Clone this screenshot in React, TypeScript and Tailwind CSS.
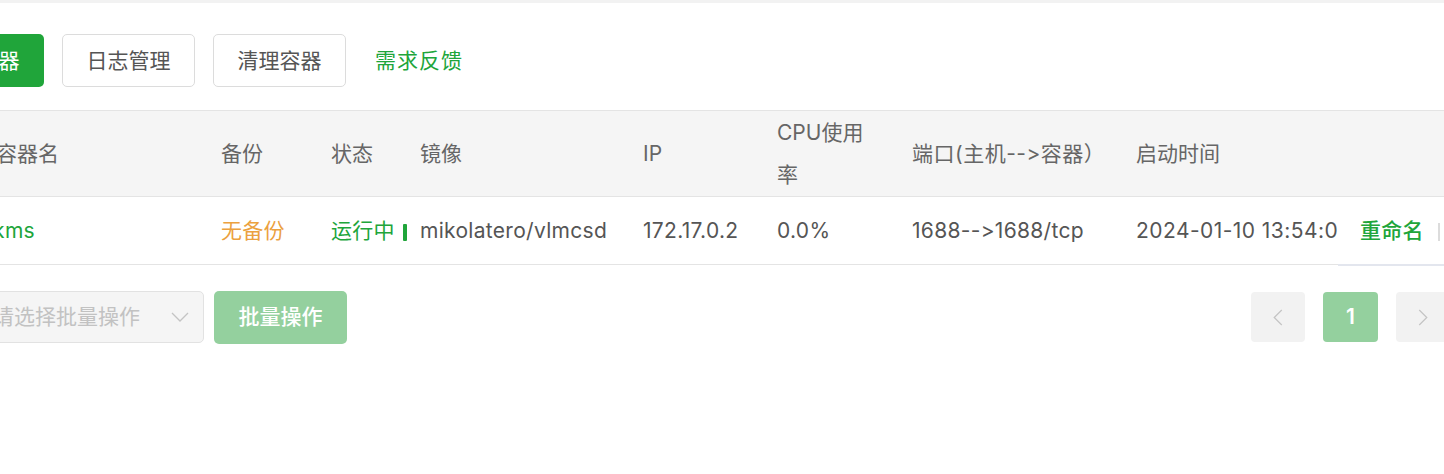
import React from 'react';

const Chevron: React.FC<{ dir: 'left' | 'right' | 'down'; className?: string }> = ({ dir, className }) => {
  const pts = dir === 'left' ? '9,1 1,9 9,17' : dir === 'right' ? '1,1 9,9 1,17' : '1,1 9,9 17,1';
  const box = dir === 'down' ? '0 0 18 10' : '0 0 10 18';
  return (
    <svg viewBox={box} className={className} fill="none" stroke="currentColor" strokeWidth="1.3">
      <polyline points={pts} />
    </svg>
  );
};

const cols = [300, 110, 89, 223, 134, 135, 224, 212, 112];

export default function App() {
  return (
    <div className="w-[1444px] h-[474px] overflow-hidden bg-white text-[21px] text-[#555] font-['Inter','Noto_Sans_CJK_SC',sans-serif] [font-feature-settings:'calt'_0,'liga'_0]">
      <div className="h-[3px] bg-[#f2f2f2]" />
      <div className="-ml-[89px] w-[1539px] pt-[31px]">
        {/* toolbar */}
        <div className="flex items-center gap-[18px]">
          <button className="w-[133px] h-[53px] rounded-[5px] bg-[#20a53a] text-white">创建容器</button>
          <button className="w-[133px] h-[53px] rounded-[5px] border border-[#dcdcdc] bg-white">日志管理</button>
          <button className="w-[133px] h-[53px] rounded-[5px] border border-[#dcdcdc] bg-white">清理容器</button>
          <a className="ml-[11px] tracking-[1px] text-[#20a53a]">需求反馈</a>
        </div>

        {/* table */}
        <table className="mt-[23px] w-full table-fixed border-collapse">
          <colgroup>
            {cols.map((w, i) => (
              <col key={i} style={{ width: w }} />
            ))}
          </colgroup>
          <thead>
            <tr className="h-[86px] bg-[#f5f5f5] text-[#666] border-y border-[#e4e4e4]">
              <th className="pl-[85px] text-left font-normal">容器名</th>
              <th className="pl-[10px] text-left font-normal">备份</th>
              <th className="pl-[10px] text-left font-normal">状态</th>
              <th className="pl-[10px] text-left font-normal">镜像</th>
              <th className="pl-[10px] text-left font-normal">IP</th>
              <th className="pl-[10px] text-left font-normal leading-[42px]">
                CPU使用
                <br />率
              </th>
              <th className="pl-[10px] text-left font-normal whitespace-nowrap tracking-[0.5px]">{'端口(主机-->容器）'}</th>
              <th className="pl-[10px] text-left font-normal">启动时间</th>
              <th className="pl-[22px] text-left font-normal" />
            </tr>
          </thead>
          <tbody className="tracking-[0.3px]">
            <tr className="h-[68px]">
              <td className="pl-[85px] border-b border-[#e4e4e4] whitespace-nowrap">
                <span className="-ml-[86px] text-[#20a53a]">vlmcsd-kms</span>
              </td>
              <td className="pl-[10px] border-b border-[#e4e4e4] text-[#eba13f]">无备份</td>
              <td className="pl-[10px] border-b border-[#e4e4e4] whitespace-nowrap text-[#20a53a]">
                运行中
                <span className="inline-block align-middle ml-[8px] w-[4px] h-[17px] rounded-[1px] bg-[#20a53a]" />
              </td>
              <td className="pl-[10px] border-b border-[#e4e4e4] whitespace-nowrap">mikolatero/vlmcsd</td>
              <td className="pl-[10px] border-b border-[#e4e4e4]">172.17.0.2</td>
              <td className="pl-[10px] border-b border-[#e4e4e4]">0.0%</td>
              <td className="pl-[10px] border-b border-[#e4e4e4] whitespace-nowrap">{'1688-->1688/tcp'}</td>
              <td className="pl-[10px] border-b border-[#e4e4e4] whitespace-nowrap overflow-hidden tracking-[0.45px]">2024-01-10 13:54:00</td>
              <td className="pl-[22px] border-b-2 border-[#e3e6ee] bg-white whitespace-nowrap overflow-hidden">
                <span className="text-[#20a53a] font-medium">重命名</span>
                <span className="inline-block align-middle mx-[14px] w-[2px] h-[18px] bg-[#dcdcdc]" />
                <span className="text-[#20a53a]">删除</span>
              </td>
            </tr>
          </tbody>
        </table>

        {/* footer */}
        <div className="mt-[25px] flex items-center">
          <div className="ml-[60px] w-[233px] h-[52px] rounded-[5px] border border-[#e2e2e2] bg-[#f5f5f5] flex items-center pl-[21px] pr-[14px]">
            <span className="text-[#c2c2c2] whitespace-nowrap">请选择批量操作</span>
            <Chevron dir="down" className="ml-auto w-[18px] h-[10px] text-[#c4c4c4]" />
          </div>
          <button className="ml-[10px] w-[133px] h-[53px] rounded-[5px] bg-[#94d09e] text-white font-medium">批量操作</button>
          <div className="ml-auto flex items-center gap-[18px]">
            <div className="w-[54px] h-[50px] rounded-[4px] bg-[#f2f2f2] flex items-center justify-center">
              <Chevron dir="left" className="w-[10px] h-[17px] text-[#c4c4c4]" />
            </div>
            <div className="w-[55px] h-[50px] rounded-[4px] bg-[#94d09e] flex items-center justify-center text-white font-semibold">1</div>
            <div className="w-[54px] h-[50px] rounded-[4px] bg-[#f2f2f2] flex items-center justify-center">
              <Chevron dir="right" className="w-[10px] h-[17px] text-[#c4c4c4]" />
            </div>
          </div>
        </div>
      </div>
    </div>
  );
}
